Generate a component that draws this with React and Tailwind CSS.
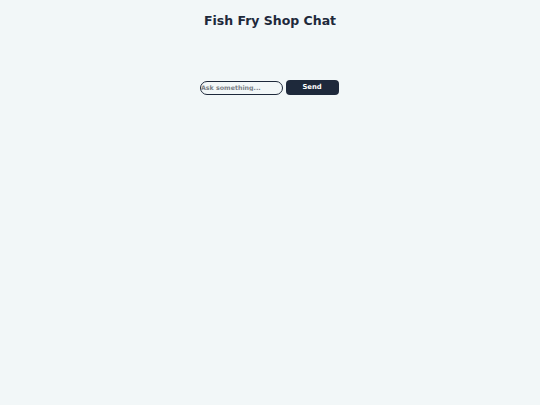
export default function App() {
  return (
    <div className="min-h-[405px] w-full bg-[#f2f7f8]" style={{ fontFamily: '"DejaVu Sans", sans-serif' }}>
      <div className="flex flex-col items-center pt-[12px]">
        <h1 className="text-[12.5px] font-bold text-[#1e293b] leading-[17px]">Fish Fry Shop Chat</h1>
        <div className="mt-[51px] mr-[2px] flex items-center gap-[3px]">
          <input
            className="w-[83px] h-[14px] rounded-full border-[1.5px] border-[#1e293b] bg-[#f2f7f8] pl-[0.5px] pr-0 text-[6.3px] font-bold placeholder:text-[#7a7f86] outline-none"
            placeholder="Ask something..."
          />
          <button className="w-[53px] h-[15px] rounded-[4px] bg-[#1e293b] text-white text-[6.8px] font-bold">Send</button>
        </div>
      </div>
    </div>
  );
}
